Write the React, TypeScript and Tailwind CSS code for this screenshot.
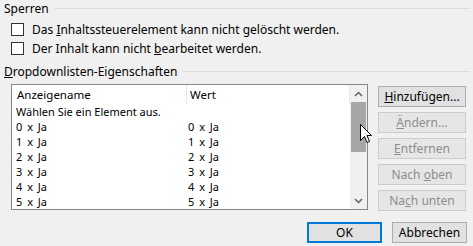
import React from 'react';

const rows = ['0 x Ja', '1 x Ja', '2 x Ja', '3 x Ja', '4 x Ja', '5 x Ja'];

const GroupHeader: React.FC<{ children: React.ReactNode }> = ({ children }) => (
  <div className="flex items-center h-[16px] pl-[4px] pr-[3px] gap-[5px]">
    <span className="whitespace-nowrap">{children}</span>
    <div className="flex-1 h-px bg-[#dcdcdc]" />
  </div>
);

const CheckRow: React.FC<{ children: React.ReactNode }> = ({ children }) => (
  <div className="flex items-center h-[19px] pl-[11px] gap-[8px]">
    <div className="w-[13px] h-[13px] border border-[#333333] bg-white" />
    <span className="whitespace-nowrap">{children}</span>
  </div>
);

const SideButton: React.FC<{ children: React.ReactNode; disabled?: boolean }> = ({ children, disabled }) => (
  <div
    className={
      disabled
        ? 'w-[88px] h-[21px] flex items-center justify-center border border-[#cccccc] bg-[#e6e6e6] text-[#8d8d8d]'
        : 'w-[88px] h-[21px] flex items-center justify-center border border-[#adadad] bg-[#e1e1e1] text-black'
    }
  >
    {children}
  </div>
);

const Chevron: React.FC<{ up?: boolean }> = ({ up }) => (
  <svg width="9" height="6" viewBox="0 0 9 6">
    <path
      d={up ? 'M1 5 L4.5 1.5 L8 5' : 'M1 1 L4.5 4.5 L8 1'}
      fill="none"
      stroke="#606060"
      strokeWidth="1.5"
    />
  </svg>
);

export default function App() {
  return (
    <div
      className="relative w-[473px] h-[246px] overflow-hidden bg-[#f0f0f0] text-[12px] leading-[15px] text-black"
      style={{ fontFamily: '"Noto Sans", "Open Sans", sans-serif' }}
    >
      <GroupHeader>Sperren</GroupHeader>
      <div className="mt-[4px]">
        <CheckRow>
          Das <u>I</u>nhaltssteuerelement kann nicht gelöscht werden.
        </CheckRow>
        <CheckRow>
          Der Inhalt kann nicht <u>b</u>earbeitet werden.
        </CheckRow>
      </div>
      <div className="mt-[5px]">
        <GroupHeader>
          <u>D</u>ropdownlisten-Eigenschaften
        </GroupHeader>
      </div>

      <div className="flex mt-[5px]">
        <div className="ml-[11px] w-[357px] h-[126px] border border-[#828790] bg-white flex overflow-hidden text-[11px] leading-[15px]">
          <div className="flex-1 flex flex-col">
            <div className="flex h-[22px] items-center border-r border-[#e5e5e5] text-[11.5px]">
              <div className="w-[174px] pl-[5px] h-full flex items-center">Anzeigename</div>
              <div className="w-px h-[19px] bg-[#e5e5e5]" />
              <div className="pl-[3px]">Wert</div>
            </div>
            <div className="flex h-[15px] items-center pl-[4px] whitespace-nowrap">Wählen Sie ein Element aus.</div>
            {rows.map((r) => (
              <div key={r} className="flex h-[15px] items-center [word-spacing:2px]">
                <div className="w-[176px] pl-[4px]">{r}</div>
                <div>{r}</div>
              </div>
            ))}
          </div>
          <div className="w-[17px] h-full bg-[#f0f0f0] flex flex-col">
            <div className="h-[17px] flex items-center justify-center">
              <Chevron up />
            </div>
            <div className="flex-1 px-[1px]">
              <div className="h-[50px] bg-[#a6a6a6]" />
            </div>
            <div className="h-[17px] flex items-center justify-center">
              <Chevron />
            </div>
          </div>
        </div>

        <div className="ml-[10px] pt-[2px] flex flex-col gap-[5px]">
          <SideButton>
            <span>
              <u>H</u>inzufügen...
            </span>
          </SideButton>
          <SideButton disabled>
            <span>
              <u>Ä</u>ndern...
            </span>
          </SideButton>
          <SideButton disabled>
            <span>
              <u>E</u>ntfernen
            </span>
          </SideButton>
          <SideButton disabled>
            <span>
              Nach <u>o</u>ben
            </span>
          </SideButton>
          <SideButton disabled>
            <span>
              Na<u>c</u>h unten
            </span>
          </SideButton>
        </div>
      </div>

      <div className="flex justify-end gap-[10px] pr-[6px] mt-[11px]">
        <div className="w-[75px] h-[21px] flex items-center justify-center border-2 border-[#0078d7] bg-[#e1e1e1]">
          OK
        </div>
        <div className="w-[75px] h-[21px] flex items-center justify-center border border-[#adadad] bg-[#e1e1e1]">
          Abbrechen
        </div>
      </div>

      <svg
        className="absolute left-[360px] top-[124px]"
        width="13"
        height="20"
        viewBox="0 0 13 20"
      >
        <path
          d="M0.5 0.5 L0.5 16.5 L4.5 12.5 L7 18.5 L9.5 17.5 L7 11.5 L11.5 11.5 Z"
          fill="white"
          stroke="black"
          strokeWidth="1"
          strokeLinejoin="miter"
        />
      </svg>
    </div>
  );
}
